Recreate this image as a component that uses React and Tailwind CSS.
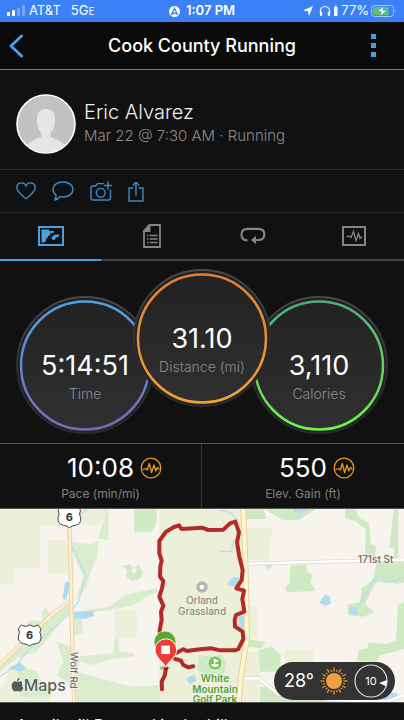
import React from "react";

const stroke = { fill: "none", strokeLinecap: "round", strokeLinejoin: "round" };

const PULSE = "M3 12.5 L5.5 11.5 L7.3 13 L9.3 6.5 L11.6 15.5 L14 8 L15.8 14 L17.4 10.5 L19 12";

const HeartIcon = () => (
  <svg width="20" height="18" viewBox="0 0 20 18" {...stroke} stroke="currentColor" strokeWidth="1.4">
    <path d="M10 16.8 C4 12 .8 9 .8 5.5 A4.7 4.7 0 0 1 10 4.2 A4.7 4.7 0 0 1 19.2 5.5 C19.2 9 16 12 10 16.8Z" />
  </svg>
);

const CommentIcon = () => (
  <svg width="22" height="20" viewBox="0 0 22 20" {...stroke} stroke="currentColor" strokeWidth="1.4">
    <path d="M11 1 C16.8 1 21 4.2 21 8.5 S16.8 16 11 16 C9.8 16 8.8 15.8 7.8 15.6 C6.5 17.8 4.5 18.8 2.8 19 C4 17.5 4.3 15.8 4 14 C2.2 12.6 1 10.7 1 8.5 C1 4.2 5.2 1 11 1Z" />
  </svg>
);

const CameraIcon = () => (
  <svg width="22" height="20" viewBox="0 0 22 20" {...stroke} stroke="currentColor" strokeWidth="1.4">
    <path d="M13.5 2.6 H7.5 L5.5 5 H3 Q1 5 1 7 V17 Q1 19 3 19 H18.5 Q20.5 19 20.5 17 V9" />
    <circle cx="10.7" cy="11.8" r="4.4" />
    <path d="M18 1 V8 M14.5 4.5 H21.5" />
  </svg>
);

const ShareIcon = () => (
  <svg width="16" height="21" viewBox="0 0 16 21" {...stroke} stroke="currentColor" strokeWidth="1.4">
    <path d="M5 7 H1 V20 H15 V7 H11 M8 14 V1.2 M5.2 4 L8 1.2 L10.8 4" />
  </svg>
);

const MapTabIcon = () => (
  <svg width="26" height="20" viewBox="0 0 26 20" fill="currentColor">
    <rect x="1" y="1" width="24" height="18" fill="none" stroke="currentColor" strokeWidth="2" />
    <path d="M3.5 3.5 H11 V5 H16 V6.5 L12 7.5 L12.5 9 L10 10 V11.5 L8 12.5 V15 L6 16.5 H3.5Z" />
    <path d="M13.5 11 L17 8.5 L21.5 8.5 L21 10.5 L18 11.5 L16.5 14 L14 13.5Z" />
  </svg>
);

const DocumentTabIcon = () => (
  <svg width="18" height="24" viewBox="0 0 18 24" fill="none" stroke="currentColor" strokeWidth="1.8">
    <path d="M6.5 1 H17 V23 H1 V7Z" />
    <path d="M1 7 L6.5 1 V7Z" fill="currentColor" />
    <path d="M4 11.5 H5.5 M6.8 11.5 H14.5 M4 15 H5.5 M6.8 15 H14.5 M4 18.5 H5.5 M6.8 18.5 H14.5" strokeWidth="1.7" />
  </svg>
);

const LapsTabIcon = () => (
  <svg width="26" height="18" viewBox="0 0 26 18" fill="none" stroke="currentColor" strokeWidth="2.2">
    <path d="M7.5 13.3 C4 13.3 1.5 11.5 1.5 7.5 C1.5 3.5 4 1.8 7.5 1.8 H18.5 C22 1.8 24.3 3.5 24.3 7.5 C24.3 11.5 22 13 18.5 13 H15" />
    <path d="M11 13 L16 8.8 V17.2Z" fill="currentColor" stroke="none" />
  </svg>
);

const ChartTabIcon = () => (
  <svg width="24" height="20" viewBox="0 0 24 20" fill="none" stroke="currentColor">
    <rect x="1" y="1" width="22" height="18" strokeWidth="2" />
    <path d="M4.5 11 L7 10 L9 11.5 L11.5 5.5 L14 14.5 L16.5 7.5 L18 12.5 L20 10.5" strokeWidth="1.3" />
  </svg>
);

const PulseBadge = () => (
  <svg width="22" height="22" viewBox="0 0 22 22" {...stroke} stroke="#e8952f" strokeWidth="1.3" aria-hidden="true">
    <circle cx="11" cy="11" r="9.8" />
    <path d={PULSE} />
  </svg>
);

const actions = [
  { label: "Like", icon: HeartIcon },
  { label: "Comment", icon: CommentIcon },
  { label: "Add photo", icon: CameraIcon },
  { label: "Share", icon: ShareIcon },
];

const tabs = [
  { label: "Overview", icon: MapTabIcon },
  { label: "Details", icon: DocumentTabIcon },
  { label: "Laps", icon: LapsTabIcon },
  { label: "Charts", icon: ChartTabIcon },
];

const gauges = [
  { id: "time", value: "5:14:51", label: "Time", from: "#4ba3e0", to: "#7c66b5", place: "mt-[27px]" },
  { id: "distance", value: "31.10", label: "Distance (mi)", from: "#e07f35", to: "#f0a13d", place: "relative z-10 -mx-[21px]" },
  { id: "calories", value: "3,110", label: "Calories", from: "#50ad7c", to: "#6df548", place: "mt-[27px]" },
];

const stats = [
  { label: "Pace (min/mi)", value: "10:08" },
  { label: "Elev. Gain (ft)", value: "550" },
];

const StatusBar = () => (
  <div className="grid h-[22px] grid-cols-[1fr_auto_1fr] items-center bg-[#3b80f5] px-[7px] text-[13px] text-white">
    <div className="flex items-center">
      <svg width="18" height="12" viewBox="0 0 18 12" fill="#fff">
        <rect x="0" y="7" width="3" height="4" rx="1" />
        <rect x="5" y="5" width="3" height="6" rx="1" />
        <rect x="10" y="3" width="3" height="8" rx="1" opacity=".3" />
        <rect x="15" y="0" width="3" height="11" rx="1" opacity=".3" />
      </svg>
      <span className="ml-1">AT&amp;T</span>
      <span className="ml-2.5">5G</span>
      <span className="text-[10px] leading-[16px]">E</span>
    </div>
    <div className="flex items-center gap-1.5 font-semibold">
      <svg width="11" height="11" viewBox="0 0 10 10">
        <circle cx="5" cy="5" r="5" fill="#fff" />
        <path d="M5 2 L7.5 7.5 L5 6.3 L2.5 7.5Z" fill="none" stroke="#3b80f5" strokeWidth="1.2" />
      </svg>
      1:07 PM
    </div>
    <div className="flex items-center justify-end">
      <svg width="36" height="12" viewBox="0 0 36 12" fill="#fff">
        <path d="M10 1 L6 11 L5 6.3 L0 5.5Z" />
        <path d="M17.3 8 V6.2 A4.7 4.7 0 0 1 26.7 6.2 V8" fill="none" stroke="#fff" strokeWidth="1.1" />
        <rect x="17" y="6.5" width="2.2" height="4.5" rx="1" />
        <rect x="24.8" y="6.5" width="2.2" height="4.5" rx="1" />
        <path d="M31 2 H32 V0.5 H33.5 V2 H34.5 V11 H31Z" />
      </svg>
      <span className="ml-0.5">77%</span>
      <svg className="ml-0.5" width="26" height="12" viewBox="0 0 26 12">
        <rect x=".5" y=".5" width="22" height="11" rx="3" fill="none" stroke="#a9c6fb" />
        <rect x="2" y="2" width="15.5" height="8" rx="1.5" fill="#62c562" />
        <path d="M24 4 Q25.6 6 24 8Z" fill="#a9c6fb" />
        <path d="M13 .8 L6.5 6.7 H10.3 L8.8 11.4 L15.8 5.3 H11.8Z" fill="#fff" stroke="#3b80f5" strokeWidth=".6" />
      </svg>
    </div>
  </div>
);

const Header = () => (
  <header className="flex h-12 items-center justify-between border-b border-[#3d85b8] bg-[#0b0b0b] px-2">
    <button aria-label="Back" className="flex w-8 items-center text-[#4a9fe0]">
      <svg width="16" height="24" viewBox="0 0 16 24" {...stroke} stroke="currentColor" strokeWidth="3">
        <path d="M13.5 2 L3 12 L13.5 22" />
      </svg>
    </button>
    <h1 className="text-lg font-medium text-white">Cook County Running</h1>
    <button aria-label="More options" className="flex w-8 flex-col items-end gap-1 pr-5">
      <i className="size-[5px] bg-[#4a9fe0]" />
      <i className="size-[5px] bg-[#4a9fe0]" />
      <i className="size-[5px] bg-[#4a9fe0]" />
    </button>
  </header>
);

const Profile = () => (
  <section className="flex h-[100px] items-center gap-2 border-b border-[#2b2b2b] px-4 pt-2">
    <svg width="60" height="60" viewBox="0 0 60 60" role="img" aria-label="Eric Alvarez">
      <defs>
        <clipPath id="avatar">
          <circle cx="30" cy="30" r="28.5" />
        </clipPath>
      </defs>
      <circle cx="30" cy="30" r="29" fill="#c2c2c2" stroke="#fff" strokeWidth="1.6" />
      <g clipPath="url(#avatar)" fill="#e6e6e6">
        <path d="M30 15 C36 15 39 19 39 25 C39 32 37 37 34.5 39 V43 C36 45 42 45.5 47 50 L50 60 H10 L13 50 C18 45.5 24 45 25.5 43 V39 C23 37 21 32 21 25 C21 19 24 15 30 15Z" />
        <path d="M8 54 Q16 45 26 43 H34 Q44 45 52 54 L40 62 H20Z" />
      </g>
    </svg>
    <div>
      <h2 className="text-xl leading-6 font-light text-[#ededed]">Eric Alvarez</h2>
      <p className="text-[15px] leading-6 font-light text-[#8c8c8c]">Mar 22 @ 7:30 AM · Running</p>
    </div>
  </section>
);

const Gauge = ({ id, value, label, from, to, place }) => (
  <div className={`grid size-[138px] shrink-0 ${place}`}>
    <svg className="col-start-1 row-start-1" viewBox="0 0 138 138" aria-hidden="true">
      <defs>
        <linearGradient id={`${id}-ring`} x1="0" y1="0" x2="0" y2="1">
          <stop offset="0" stopColor={from} />
          <stop offset="1" stopColor={to} />
        </linearGradient>
        <linearGradient id={`${id}-face`} x1="0" y1="0" x2="0" y2="1">
          <stop offset="0" stopColor="#222" />
          <stop offset="1" stopColor="#303030" />
        </linearGradient>
        <linearGradient id={`${id}-rim`} x1="0" y1="0" x2="0" y2="1">
          <stop offset="0" stopColor="#484848" />
          <stop offset=".6" stopColor="#2b2b2b" />
          <stop offset="1" stopColor="#2b2b2b" />
        </linearGradient>
      </defs>
      <circle cx="69" cy="69" r="68" fill="#202020" stroke={`url(#${id}-rim)`} strokeWidth="2" />
      <circle cx="69" cy="69.5" r="64" fill={`url(#${id}-face)`} stroke={`url(#${id}-ring)`} strokeWidth="2.5" />
    </svg>
    <div className="z-10 col-start-1 row-start-1 flex flex-col items-center pt-[54px]">
      <strong className="text-[27px] leading-8 font-normal text-white">{value}</strong>
      <span className="text-sm leading-6 font-light text-[#8c8c8c]">{label}</span>
    </div>
  </div>
);

const Shield = ({ x, y }) => (
  <g transform={`translate(${x} ${y})`}>
    <path
      d="M-25 -31 Q-12 -22 0 -31 Q12 -22 25 -31 L34 -20 Q27 -9 34 2 Q36 22 18 25 Q7 26 0 32 Q-7 26 -18 25 Q-36 22 -34 2 Q-27 -9 -34 -20Z"
      fill="#fff"
      stroke="#444"
      strokeWidth="3"
    />
    <text y="11" textAnchor="middle" fontSize="33" fontWeight="700" fill="#333">6</text>
  </g>
);

// drawn at three units per pixel
const RouteMap = () => (
  <svg className="block h-full w-full" viewBox="0 12 1212 579" preserveAspectRatio="xMidYMid slice" fontWeight="500">
    <rect y="12" width="1212" height="579" fill="#f7f4ee" />

    <g fill="#edf0d9">
      <path d="M0 12 H322 L298 60 H120 V190 H45 V237 H0Z" />
      <path d="M145 105 H222 V205 H145Z" />
      <path d="M478 12 H730 V591 H478Z" />
      <path d="M345 315 H410 V400 H345Z M30 490 L110 500 L150 591 H0 V560Z" />
      <path d="M738 70 H817 L805 165 H738Z M740 305 H774 V400 H740Z M855 435 H940 V475 H855Z" />
      <path d="M720 440 H778 V591 H715Z" />
    </g>

    <g fill="#d9edcd">
      <path d="M305 12 H325 V105 L295 102 L318 20Z M218 112 L275 118 L298 105 L290 160 L270 205 L258 250 L240 270 L225 290 L250 215 L218 140Z" />
      <path d="M218 320 L330 305 L375 270 L473 248 V262 L440 275 L400 300 L330 316 L245 325 L248 385 L222 392Z" />
      <path d="M170 410 L215 425 V455 L340 445 L343 400 L355 402 L358 440 L400 445 L402 455 L345 460 L280 480 L240 470 L228 500 L395 545 L480 540 V591 H222 V545 L170 510 L190 470Z" />
      <path d="M0 470 L75 400 L65 370 L95 345 L130 350 L125 320 L140 305 L150 335 L205 295 L210 320 L110 440 L50 460 L0 500Z" />
      <path d="M50 480 L110 500 L125 530 L160 550 L150 580 L60 575Z" />
    </g>

    <g fill="#cfe9c2">
      <path d="M403 12 H470 V52 L455 82 H403Z" />
      <path d="M368 182 L390 178 L400 190 L392 200 L405 205 L412 195 L405 188 L415 178 L428 200 L420 222 L398 228 L378 215 L382 198Z" />
      <path d="M738 12 H790 L800 42 H738Z M800 12 H950 L895 45 H850 L812 25Z" />
      <path d="M1035 12 H1065 L1080 40 L1107 55 L1112 115 L1130 125 L1125 155 L1095 145 L1098 75 L1070 50 L1035 40Z" />
      <path d="M1182 12 H1195 V170 H1182 V130 L1168 128Z" />
      <path d="M1130 172 H1212 V232 L1190 238 L1160 228 L1135 225 L1110 265 L1095 297 L1122 322 L1090 335 L1045 330 L1042 300 L1080 290 L1085 250 L1120 225Z" />
      <path d="M1194 300 L1212 290 V430 L1188 440 L1140 450 L1130 470 L1070 468 L1075 435 L1105 428 L1102 412 L1160 418 L1188 405Z" />
      <path d="M870 182 L920 178 L922 200 L938 210 L930 230 L948 258 L860 262 L855 245 L870 235Z" />
      <path d="M745 402 L800 412 L780 430 L745 425Z M775 435 L815 425 L842 450 V500 H780Z M790 180 H817 L808 194Z" />
      <path d="M780 545 H815 L850 565 L1000 555 L1030 591 H780Z" />
      <path d="M595 455 L665 450 L678 475 L672 505 L610 508 L592 495Z" />
    </g>

    <g fill="#afdbf1">
      <path d="M195 232 L210 230 L206 260 L198 285 L188 280Z" />
      <path d="M222 322 L280 318 L282 332 L255 342 L222 340Z" />
      <path d="M25 490 L60 472 L78 490 L60 500Z" />
      <path d="M565 515 L585 510 L588 528 L570 538 L560 525Z" />
      <path d="M680 238 L700 215 L718 218 L712 240 L695 245Z M716 330 L732 335 V370 L716 372Z" />
      <path d="M882 12 H930 L905 24 L880 22Z" />
      <path d="M958 293 L975 268 L990 275 L992 297 L975 302Z" />
      <path d="M1045 325 L1055 305 L1070 308 L1075 330Z" />
      <path d="M1145 580 L1165 563 L1192 565 L1190 580 L1160 590Z" />
    </g>

    <g fill="none" stroke="#b5dcef" strokeWidth="3.5">
      <path d="M262 12 L205 60 L203 100 L258 212 L235 290 L200 335 L80 440 L50 480 L0 515" />
      <path d="M655 15 L690 22 L712 45 M658 139 H695 L700 108 L712 100" />
      <path d="M1080 298 L1100 265 L1120 225 L1165 232 L1212 218" />
    </g>

    <g fill="none" strokeLinejoin="round">
      <path d="M0 480 L75 405 L160 325 L213 285" stroke="#eccf9f" strokeWidth="12" />
      <path d="M0 480 L75 405 L160 325 L213 285" stroke="#fbf1d4" strokeWidth="7" />
      <path d="M209 60 L215 350 L222 591" stroke="#eccf9f" strokeWidth="12" />
      <path d="M209 60 L215 350 L222 591" stroke="#fbf1d4" strokeWidth="7" />
      <path d="M738 176 L1212 164 M725 520 H775 L835 568 L1000 585 L1160 590 L1212 570" stroke="#d8d6d2" strokeWidth="12" />
      <path d="M738 176 L1212 164 M725 520 H775 L835 568 L1000 585 L1160 590 L1212 570" stroke="#fff" strokeWidth="8" />
      <path d="M730 12 L737 200 L741 400 L722 520 L716 591" stroke="#eccf9f" strokeWidth="18" />
      <path d="M730 12 L737 200 L741 400 L722 520 L716 591" stroke="#fdf6cf" strokeWidth="12" />
    </g>

    <g stroke="#f7f4ee" strokeWidth="5" paintOrder="stroke" strokeLinejoin="round">
      <text x="1074" y="175" fontSize="30" fill="#6b6b6b">171st St</text>
      <text transform="translate(212 440) rotate(91)" fontSize="30" fill="#6b6b6b">Wolf Rd</text>
    </g>

    <circle cx="606" cy="246" r="12" fill="#fff" stroke="#b5b5b5" strokeWidth="10" />
    <g textAnchor="middle" fontSize="30" fill="#8f8f8f" stroke="#edf0d9" strokeWidth="5" paintOrder="stroke">
      <text x="606" y="297">Orland</text>
      <text x="606" y="329">Grassland</text>
    </g>

    <circle cx="645" cy="474" r="21" fill="#7cc25a" stroke="#fff" strokeWidth="2" />
    <path d="M641 462 L655 467 L644 472 V480 M634 480 Q645 474 656 480 Q645 490 634 480Z" fill="#fff" stroke="#fff" strokeWidth="2.5" />
    <g textAnchor="middle" fontSize="30" fontWeight="600" fill="#50a03a" stroke="#f3f6e4" strokeWidth="5" paintOrder="stroke">
      <text x="645" y="531">White</text>
      <text x="645" y="563">Mountain</text>
      <text x="645" y="595">Golf Park</text>
    </g>

    <Shield x={208} y={36} />
    <Shield x={89} y={391} />

    <path
      d="M486 553 L485 530 L494 512 L498 490 M482 400 L479 375 L485 345 L483 320 L490 302 L478 275 L486 250 L490 228 L480 215 L481 185 L485 167 L478 145 L478 108 L498 80 L522 66 L537 61 L545 72 L606 68 L625 75 L670 74 L690 55 L706 50 L717 82 L711 112 L718 155 L728 195 L725 225 L709 250 L732 257 L727 282 L733 320 L708 330 L704 345 L705 365 L728 380 L730 402 L715 432 L705 436 L660 436 L635 430 L600 433 L560 438 L550 433 L530 443 M525 462 L542 466 L550 480 L565 487 L580 484"
      {...stroke}
      stroke="#b32a28"
      strokeWidth="12"
    />

    <circle cx="495" cy="411" r="33" fill="#5aa92f" stroke="#fff" strokeWidth="2" />
    <ellipse cx="494" cy="489" rx="15" ry="6" fill="#000" opacity=".25" />
    <path d="M497 487 C487 466 465 458 465 434 A32 32 0 0 1 530 434 C530 458 507 466 497 487Z" fill="#ec3d38" stroke="#fff" strokeWidth="3" />
    <rect x="484" y="422" width="26" height="25" fill="#fff" />

    <g fill="#595959">
      <path d="M58 530 C62 528 67 529 66 536 C66 540 66 546 70 549 C66 559 62 561 57 559 Q52 557 47 559 C40 561 34 550 35 541 C36 530 45 527 51 530 Q54 531 58 530Z M51 528 Q51 520 58 518 Q59 526 51 528Z" />
      <text x="71" y="557" fontSize="48" stroke="#fff" strokeWidth="3" paintOrder="stroke">Maps</text>
    </g>
  </svg>
);

const WeatherPill = () => (
  <div className="absolute right-[9px] bottom-[2px] flex h-[38px] w-[121px] items-center justify-between rounded-full bg-[#333] pr-[7px] pl-2.5 text-white">
    <span className="text-lg">28°</span>
    <svg width="28" height="28" viewBox="0 0 28 28" stroke="#e8952f" strokeWidth="1.3" aria-label="Sunny">
      <circle cx="14" cy="14" r="8" fill="#f0a040" stroke="none" />
      {Array.from({ length: 24 }, (_, i) => (
        <path key={i} d={i % 2 ? "M14 4.4 V2.5" : "M14 4.4 V.5"} transform={`rotate(${i * 15} 14 14)`} />
      ))}
    </svg>
    <div className="grid size-[34px] place-items-center">
      <svg className="col-start-1 row-start-1" width="34" height="34" viewBox="0 0 34 34" aria-hidden="true">
        <circle cx="17" cy="17" r="16" fill="none" stroke="#ddd" strokeWidth="1.2" />
        <path d="M25 19 L33 16 L32.5 22.5Z" fill="#fff" />
      </svg>
      <span className="col-start-1 row-start-1 text-[11px]">10</span>
    </div>
  </div>
);

export default function App() {
  return (
    <div className="flex h-screen flex-col overflow-y-auto bg-[#111] font-['Inter',sans-serif] [scrollbar-width:none] *:shrink-0">
      <StatusBar />
      <Header />
      <Profile />

      <div className="flex h-[43px] items-center gap-4 border-b border-[#2b2b2b] px-4 text-[#3d8cc9]">
        {actions.map(({ label, icon: Icon }) => (
          <button key={label} aria-label={label}>
            <Icon />
          </button>
        ))}
      </div>

      <nav className="grid h-12 grid-cols-4">
        {tabs.map(({ label, icon: Icon }, i) => (
          <button
            key={label}
            aria-label={label}
            className={`flex items-center justify-center border-b-2 ${
              i === 0 ? "border-[#4a9fe0] text-[#4a9fe0]" : "border-[#444] text-[#858585]"
            }`}
          >
            <Icon />
          </button>
        ))}
      </nav>

      <section className="flex h-[183px] items-start justify-center border-b border-[#555] pt-2">
        {gauges.map((gauge) => (
          <Gauge key={gauge.id} {...gauge} />
        ))}
      </section>

      <section className="grid h-[65px] grid-cols-2 divide-x divide-[#3a3a3a] border-b border-[#555]">
        {stats.map(({ label, value }) => (
          <div key={label} className="flex flex-col items-center pt-2">
            <div className="flex items-center gap-1.5 pl-7">
              <strong className="text-[26px] leading-8 font-normal text-white">{value}</strong>
              <PulseBadge />
            </div>
            <span className="text-xs leading-5 text-[#808080]">{label}</span>
          </div>
        ))}
      </section>

      <section className="relative h-[194px] border-b border-[#555]">
        <RouteMap />
        <WeatherPill />
      </section>

      <p className="px-4 pt-2.5 pb-4 text-base text-[#ededed]">A trail still Run and in the hills</p>
    </div>
  );
}
